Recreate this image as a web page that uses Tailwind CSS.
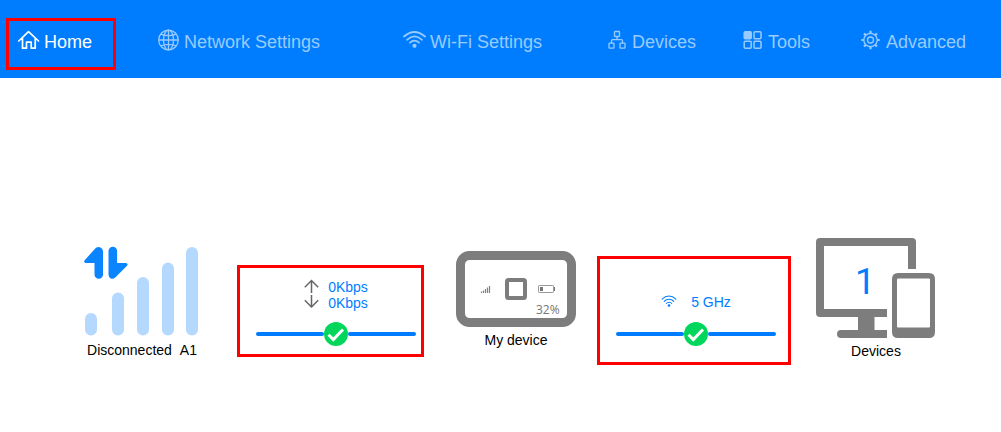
<!DOCTYPE html>
<html lang="en">
<head>
<meta charset="utf-8">
<meta name="viewport" content="width=device-width, initial-scale=1">
<title>Home</title>
<script src="https://cdn.jsdelivr.net/npm/@tailwindcss/browser@4"></script>
</head>
<body class="bg-white text-black font-['Liberation_Sans',Arial,sans-serif]">
<header class="bg-[#007dff]">
  <nav class="grid grid-cols-[140fr_245fr_205fr_135fr_118fr_140fr] items-center h-[78px] pl-[18px] pt-1.5 text-lg leading-6 whitespace-nowrap text-[#99cbff]">
    <div class="relative">
      <a href="#" aria-current="page" class="flex items-center gap-1 text-white">
        <svg class="w-[22px] h-[22px] mb-1" viewBox="0 0 22 22" fill="none" stroke="currentColor" stroke-width="1.700" stroke-linejoin="round" stroke-linecap="round"><path d="M.8 12 10.500 2.600 20.500 12M4.500 9.500v9.700h4v-6h4.700v6h4V9.500"/></svg>
        Home</a>
      <span class="absolute -left-[12px] -top-[11px] w-[110px] h-[52px] border-3 border-[#f00] pointer-events-none"></span>
    </div>
    <a href="#" class="flex items-center gap-1">
      <svg class="w-[22px] h-[22px] mb-1" viewBox="0 0 22 22" fill="none" stroke="currentColor" stroke-width="1.300"><circle cx="10.500" cy="11" r="9.800"/><ellipse cx="10.500" cy="11" rx="5" ry="9.800"/><path d="M10.500 1.200v19.600M.7 11h19.600M2.800 5.200q7.700 3 15.400 0M2.800 16.800q7.700-3 15.400 0"/></svg>
      Network Settings</a>
    <a href="#" class="flex items-center gap-1">
      <svg class="w-[23px] h-[22px] mb-1" viewBox="0 0 23 22" fill="none" stroke="currentColor" stroke-width="1.700" stroke-linecap="round"><path d="M1 7.500Q11.500-1.500 22 7.500M4 10.800Q11.500 4 19 10.800M7 13.700Q11.500 9.500 16 13.700"/><circle cx="11.500" cy="16.800" r="2.100" fill="currentColor" stroke="none"/></svg>
      Wi-Fi Settings</a>
    <a href="#" class="flex items-center gap-1.5">
      <svg class="w-[18px] h-[22px] mb-1" viewBox="0 0 18 22" fill="none" stroke="currentColor" stroke-width="1.300"><rect x="6.500" y="2.500" width="5" height="5" rx=".7"/><rect x="1" y="14.200" width="5" height="5" rx=".7"/><rect x="12" y="14.200" width="5" height="5" rx=".7"/><path d="M9 7.500v3.200M3.500 14v-2.300q0-1 1-1h9q1 0 1 1V14"/></svg>
      Devices</a>
    <a href="#" class="flex items-center gap-1.5">
      <svg class="w-[19px] h-[22px] mb-1" viewBox="0 0 19 22" fill="none" stroke="currentColor" stroke-width="1.500"><rect x="1.200" y="2.700" width="7" height="7" rx="1" fill="currentColor"/><rect x="11" y="2.700" width="7" height="7" rx="1"/><rect x="1.200" y="12.300" width="7" height="7" rx="1"/><rect x="11" y="12.300" width="7" height="7" rx="1"/></svg>
      Tools</a>
    <a href="#" class="flex items-center gap-1.5">
      <svg class="w-[19px] h-[22px] mb-1" viewBox="0 0 19 22" fill="none" stroke="currentColor" stroke-width="1.300" stroke-linejoin="round"><circle cx="9.500" cy="11" r="6.700"/><circle cx="9.500" cy="11" r="3"/><g stroke-width="2.200"><path d="M9.500 1.800v2.500M9.500 17.700v2.500M.3 11h2.500M16.200 11h2.500M3 4.500l1.800 1.800M14.200 15.700l1.800 1.800M3 17.500l1.800-1.800M14.200 6.300 16 4.500"/></g></svg>
      Advanced</a>
  </nav>
</header>

<main class="grid grid-cols-5 items-start pt-40 pl-[66px] pr-[35px] pb-16 text-sm leading-4">
  <figure class="mt-2 flex flex-col items-center gap-1.5 pr-7">
    <svg class="w-[116px] h-[90px]" viewBox="0 0 116 90" role="img" aria-label="Signal strength">
      <g stroke="#b5d8ff" stroke-width="12" stroke-linecap="round"><path d="M7 73v10.500M34 52.500v31M59 37v46.500M84 22.500v61M108 7v76.500"/></g>
      <path fill="#0a84ff" d="M11.500 2.200Q14 .4 16.500 1.500 19 2.500 19 5.500V28.500a4.200 4.200 0 0 1-8.500 0V17H1.500Q-.8 16.500.700 14.200ZM24.500 5a4.300 4.300 0 0 1 8.600 0V17h8.500Q45 17.500 42.800 20L31.500 31.200Q29 33.500 26.800 32.500 24.500 31.500 24.500 28.500Z"/>
    </svg>
    <figcaption class="flex gap-2"><span>Disconnected</span><span>A1</span></figcaption>
  </figure>

  <section class="relative mt-[41px] flex flex-col items-center gap-[11px]">
    <div class="flex gap-2 text-[#007dff]">
      <svg class="w-4 h-8" viewBox="0 0 16 32" fill="none" stroke="#666" stroke-width="1.500"><path d="M7.500 14V2M.8 8.200 7.500 1.500l6.700 6.700M7.500 16v12M.8 21.300l6.700 6.700 6.700-6.700"/></svg>
      <p>0Kbps<br>0Kbps</p>
    </div>
    <div class="w-40 h-6 flex items-center">
      <span class="h-1 grow rounded-full bg-[#007dff]"></span>
      <svg class="w-6 h-6" viewBox="0 0 24 24" role="img" aria-label="Connected"><circle cx="12" cy="12" r="12" fill="#00d65b"/><path d="m4.500 12.800 4.800 4.700L19 7.500" fill="none" stroke="#fff" stroke-width="3"/></svg>
      <span class="h-1 grow rounded-full bg-[#007dff]"></span>
    </div>
    <span class="absolute -left-[9px] -top-[14px] right-[2px] h-[92px] border-3 border-[#f00] pointer-events-none"></span>
  </section>

  <figure class="mt-[13px] flex flex-col items-center gap-[5px]">
    <svg class="w-[120px] h-[76px]" viewBox="0 0 120 76" role="img" aria-label="My device, battery 32%">
      <rect x="4.500" y="4.500" width="111" height="67" rx="9" fill="#fff" stroke="#7d7d7d" stroke-width="9"/>
      <rect x="51" y="29" width="18" height="18" rx="1.500" fill="none" stroke="#7d7d7d" stroke-width="4"/>
      <path d="M25.500 42v-1.500M27.500 42v-2.500M29.500 42v-4M31.500 42v-5.500M33.500 42v-7" stroke="#808080" stroke-width="1.200"/>
      <rect x="82.500" y="34.500" width="15" height="7" rx=".7" fill="none" stroke="#999"/>
      <path d="M84 36h3v4h-3ZM98 36h1v4h-1Z" fill="#777"/>
      <text x="80" y="63" font-size="12" fill="#757575" font-family="'Open Sans','Noto Sans',sans-serif">32%</text>
    </svg>
    <figcaption>My device</figcaption>
  </figure>

  <section class="relative mt-14 flex flex-col items-center gap-3">
    <div class="flex gap-3.5 text-[#007dff]">
      <svg class="w-4 h-4" viewBox="0 0 16 16" fill="none" stroke="currentColor" stroke-width="1.100"><path d="M.8 5.300q7.200-6.500 14.400 0M2.900 7.500q5.100-4.600 10.200 0M5 9.600q3-2.700 6 0"/><circle cx="8" cy="11.500" r="1.300" fill="currentColor" stroke="none"/></svg>
      <p>5 GHz</p>
    </div>
    <div class="w-40 h-6 flex items-center">
      <span class="h-1 grow rounded-full bg-[#007dff]"></span>
      <svg class="w-6 h-6" viewBox="0 0 24 24" role="img" aria-label="Connected"><circle cx="12" cy="12" r="12" fill="#00d65b"/><path d="m4.500 12.800 4.800 4.700L19 7.500" fill="none" stroke="#fff" stroke-width="3"/></svg>
      <span class="h-1 grow rounded-full bg-[#007dff]"></span>
    </div>
    <span class="absolute -left-[9px] -top-[38px] -right-[5px] h-[109px] border-3 border-[#f00] pointer-events-none"></span>
  </section>

  <figure class="flex flex-col items-center gap-[5px]">
    <svg class="w-[120px] h-[100px]" viewBox="0 0 120 100" role="img" aria-label="1 connected device">
      <path fill="#7d7d7d" fill-rule="evenodd" d="M4 0H96q4 0 4 4V31H92V8H8V71H71v8H58.500V92H71v8H25a4 4 0 0 1 0-8H42V79H4q-4 0-4-4V4Q0 0 4 0Z"/>
      <path fill="#7d7d7d" fill-rule="evenodd" d="M82 35h31q6 0 6 6V94q0 6-6 6H82q-6 0-6-6V41q0-6 6-6ZM82 40.500q-1 0-1 1V88.500q0 1 1 1h31q1 0 1-1V41.500q0-1-1-1Z"/>
      <text x="49" y="56" text-anchor="middle" font-size="36" fill="#007dff" font-family="Roboto,sans-serif">1</text>
    </svg>
    <figcaption>Devices</figcaption>
  </figure>
</main>
</body>
</html>
